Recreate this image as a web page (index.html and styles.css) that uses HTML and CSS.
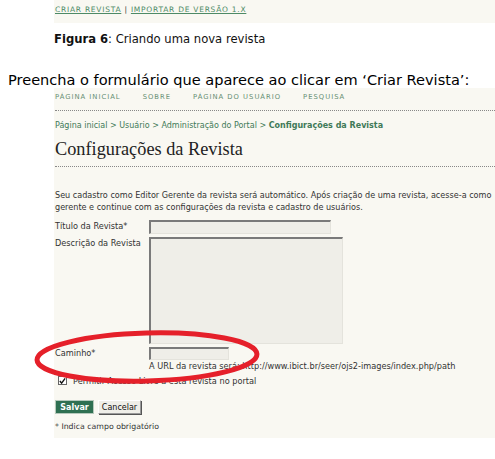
FILE: index.html
```html
<!DOCTYPE html>
<html lang="pt">
<head>
<meta charset="utf-8">
<title>Criar Revista</title>
<link rel="stylesheet" href="styles.css">
</head>
<body>
<div class="strip">
  <a class="toplink" href="#">CRIAR REVISTA</a> <span class="sep">|</span> <a class="toplink" href="#">IMPORTAR DE VERSÃO 1.X</a>
</div>
<p class="caption"><b>Figura 6</b>: Criando uma nova revista</p>
<p class="intro">Preencha o formulário que aparece ao clicar em ‘Criar Revista’:</p>
<div class="shot">
  <nav class="nav">
    <span>PÁGINA INICIAL</span>
    <span>SOBRE</span>
    <span>PÁGINA DO USUÁRIO</span>
    <span>PESQUISA</span>
  </nav>
  <div class="crumbs">Página inicial &gt; Usuário &gt; Administração do Portal &gt; <b>Configurações da Revista</b></div>
  <h1 class="title">Configurações da Revista</h1>
  <p class="lead">Seu cadastro como Editor Gerente da revista será automático. Após criação de uma revista, acesse-a como<br>gerente e continue com as configurações da revista e cadastro de usuários.</p>
  <div class="form">
    <div class="row">
      <label class="lbl">Título da Revista*</label>
      <div class="field"><div class="inp inp-title"></div></div>
    </div>
    <div class="row">
      <label class="lbl">Descrição da Revista</label>
      <div class="field"><div class="inp inp-desc"></div></div>
    </div>
    <div class="row row-path">
      <label class="lbl">Caminho*</label>
      <div class="field">
        <div class="inp inp-path"></div>
        <div class="hint">A URL da revista será: http://www.ibict.br/seer/ojs2-images/index.php/path</div>
      </div>
    </div>
  </div>
  <div class="check">
    <span class="box"><svg width="8" height="8" viewBox="0 0 8 8"><path d="M1 4 L3 6.5 L7 1" fill="none" stroke="#111" stroke-width="1.6"/></svg></span>
    <span class="check-lbl">Permitir Acesso Livre a esta revista no portal</span>
  </div>
  <div class="buttons">
    <span class="btn btn-save">Salvar</span>
    <span class="btn btn-cancel">Cancelar</span>
  </div>
  <p class="note">* Indica campo obrigatório</p>
  <svg class="ellipse" width="240" height="64" viewBox="0 0 240 64">
    <ellipse cx="120" cy="32" rx="110" ry="24" fill="none" stroke="#e5202a" stroke-width="5" transform="rotate(-1.5 120 32)"/>
  </svg>
</div>
</body>
</html>
```

FILE: styles.css
```css
* { box-sizing: border-box; }
body {
  margin: 0;
  background: #fff;
  font-family: "DejaVu Sans", Verdana, sans-serif;
  color: #333;
}
.strip {
  margin-left: 54px;
  height: 23px;
  background: #f9f8f2;
  padding: 5px 0 0 1px;
  font-size: 7.5px;
  line-height: 10px;
  letter-spacing: 0.75px;
}
.toplink {
  color: #4d8a66;
  text-decoration: underline;
}
.sep { color: #333; }
.caption {
  margin: 9px 0 0 54px;
  font-size: 11.6px;
  line-height: 14px;
  color: #111;
}
.caption b { font-weight: bold; }
.intro {
  margin: 25px 0 0 8px;
  font-size: 14.55px;
  line-height: 17px;
  color: #000;
}
.shot {
  position: relative;
  margin-left: 54px;
  height: 350px;
  background: #f9f8f2;
  padding-left: 1px;
  font-size: 8.2px;
}
.nav {
  display: flex;
  gap: 22px;
  padding-top: 4px;
  height: 23px;
  font-size: 6.8px;
  line-height: 10px;
  letter-spacing: 1px;
  color: #668f72;
  border-bottom: 1px dotted #888;
}
.crumbs {
  margin-top: 9px;
  font-size: 8px;
  line-height: 12px;
  color: #3f7a58;
}
.crumbs b { font-weight: bold; }
.title {
  margin: 6px 0 0;
  height: 29px;
  padding-bottom: 6px;
  font-family: "Liberation Serif", "Times New Roman", serif;
  font-weight: normal;
  font-size: 18.3px;
  line-height: 22px;
  color: #222;
  border-bottom: 1px dotted #888;
}
.lead {
  margin: 22px 0 0;
  font-size: 8.1px;
  line-height: 12px;
  white-space: nowrap;
  color: #333;
}
.form { margin-top: 7px; }
.row {
  display: flex;
  margin-bottom: 3px;
}
.row-path { margin-top: 1px; }
.lbl {
  width: 94px;
  line-height: 13px;
  color: #333;
}
.inp {
  background: #efeee8;
  border-top: 2px solid #7a7a7a;
  border-left: 2px solid #7a7a7a;
  border-right: 1px solid #e4e3dc;
  border-bottom: 1px solid #e4e3dc;
}
.inp-title { width: 182px; height: 14px; }
.inp-desc { width: 194px; height: 107px; }
.inp-path { width: 80px; height: 13px; }
.hint {
  margin-top: 1px;
  line-height: 11px;
  color: #333;
}
.check {
  display: flex;
  align-items: flex-end;
  gap: 6px;
  margin: 2px 0 0 3px;
  height: 11px;
}
.box {
  display: flex;
  align-items: center;
  justify-content: center;
  width: 9px;
  height: 9px;
  margin-bottom: 1px;
  background: #fff;
  border: 1px solid #666;
}
.check-lbl { line-height: 10px; }
.buttons {
  display: flex;
  gap: 4px;
  margin-top: 14px;
}
.btn {
  display: flex;
  align-items: center;
  justify-content: center;
  height: 14px;
  font-size: 8px;
}
.btn-save {
  width: 39px;
  background: #2f7052;
  color: #fff;
  font-weight: bold;
  border: 1px solid #b6c9bc;
}
.btn-cancel {
  width: 43px;
  background: #efeee8;
  color: #111;
  border: 1px solid #999;
  border-top-color: #fff;
  border-left-color: #fff;
  box-shadow: 1px 1px 0 #555;
}
.note {
  margin: 8px 0 0;
  font-size: 7.8px;
  line-height: 10px;
  color: #333;
}
.ellipse {
  position: absolute;
  left: -27px;
  top: 237px;
}
```
